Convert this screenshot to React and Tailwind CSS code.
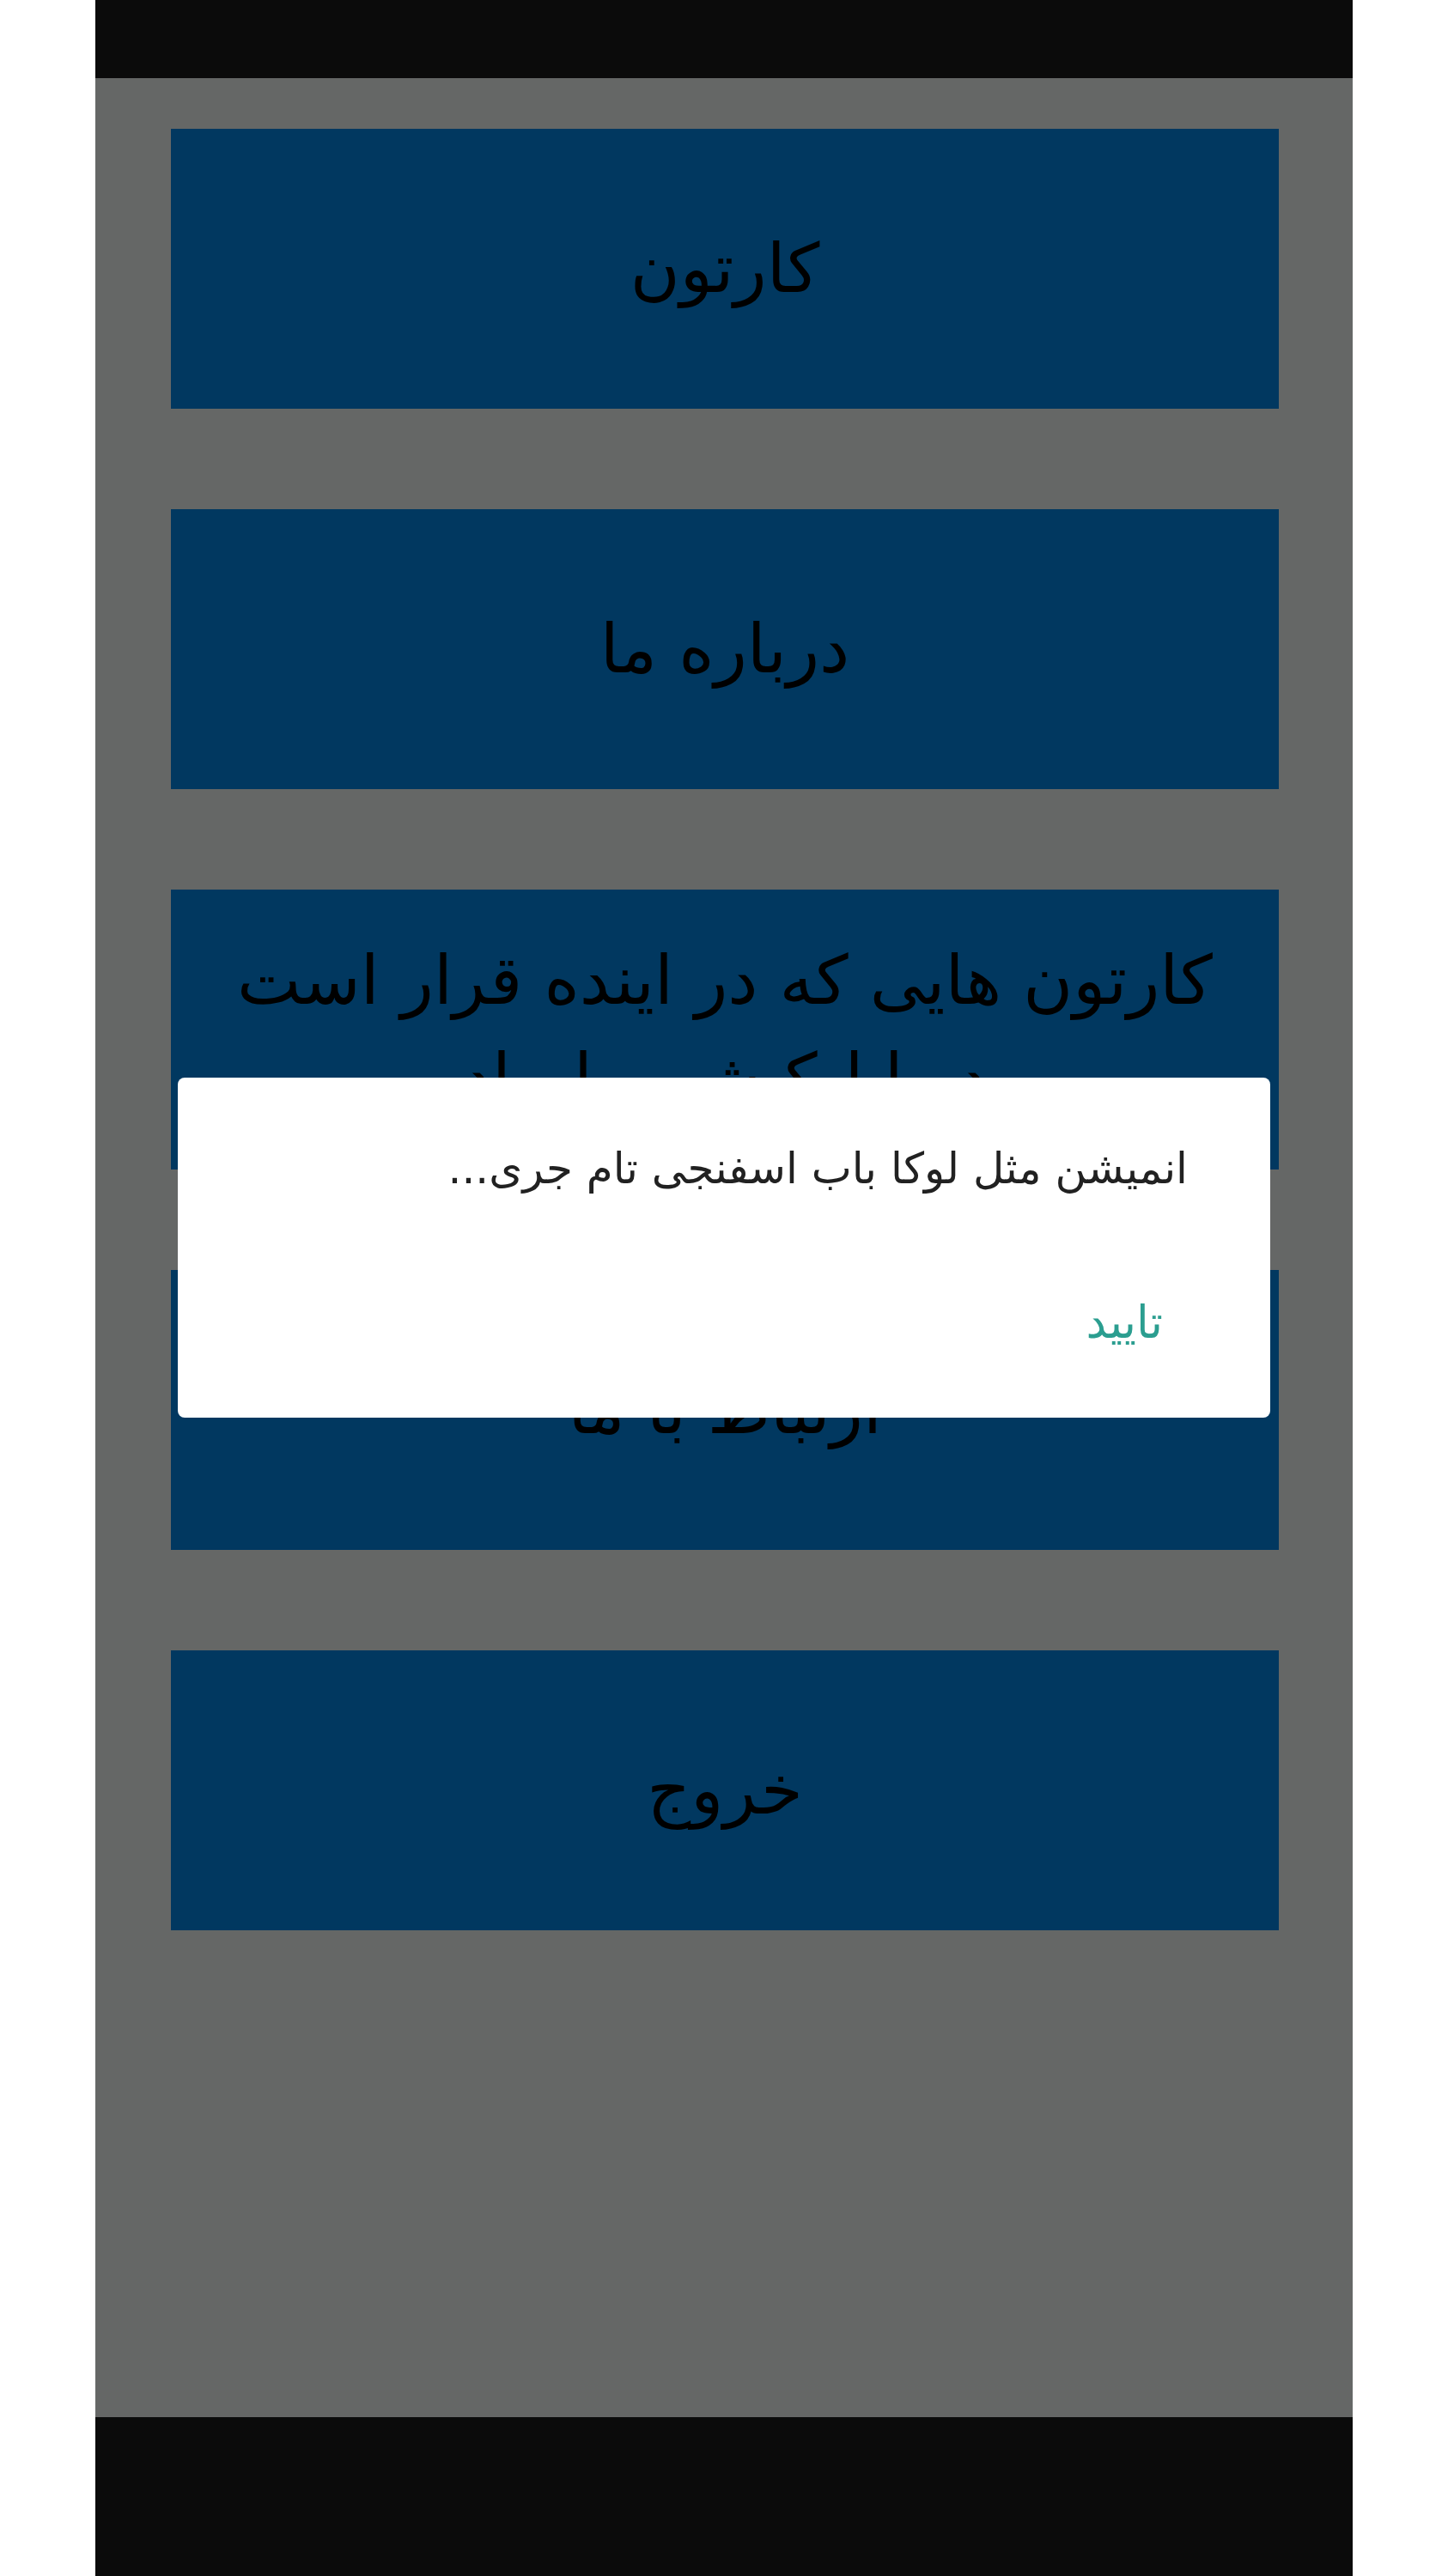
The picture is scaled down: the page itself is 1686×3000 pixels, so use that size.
export default function App() {
  const items = [
    "کارتون",
    "درباره ما",
    "کارتون هایی که در اینده قرار است در اپلیکیشن ما بیاد",
    "ارتباط با ما",
    "خروج",
  ];

  return (
    <div className="min-h-[3000px] w-full bg-white flex justify-center" dir="rtl">
      <div className="w-[1464px] flex flex-col" style={{ fontFamily: '"DejaVu Sans", sans-serif' }}>
        {/* status bar */}
        <div className="h-[91px] bg-[#0b0b0b]" />

        {/* screen content with the dimmed menu and the alert dialog */}
        <div className="relative h-[2724px] bg-[#656766] pt-[59px] pl-[88px] pr-[86px] flex flex-col gap-[117px]">
          {items.map((label) => (
            <div
              key={label}
              className="h-[326px] bg-[#013860] flex items-center justify-center px-[60px] overflow-hidden"
            >
              <span className="text-[79px] leading-[114px] text-black text-center">{label}</span>
            </div>
          ))}

          <div className="absolute inset-0 flex items-center justify-center">
            <div className="w-[1272px] h-[396px] bg-white rounded-[8px] flex flex-col">
              <div className="pt-[70px] pr-[96px] pl-[96px] text-[50px] leading-[72px] text-[#212121]">
                انمیشن مثل لوکا باب اسفنجی تام جری...
              </div>
              <div className="flex justify-start pr-[125px] pt-[111px]">
                <span className="text-[53px] leading-[64px] text-[#2b9e90]">تایید</span>
              </div>
            </div>
          </div>
        </div>

        {/* navigation bar */}
        <div className="h-[185px] bg-[#0b0b0b]" />
      </div>
    </div>
  );
}
